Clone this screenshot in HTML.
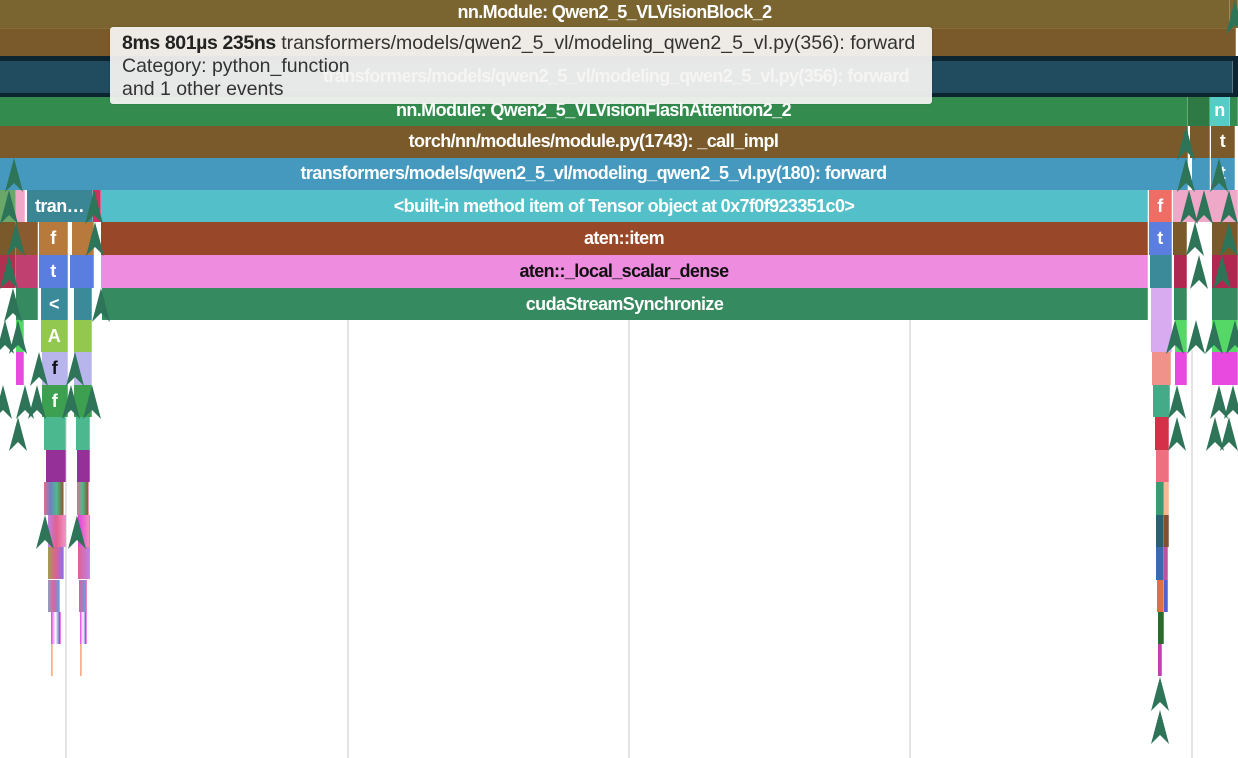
<!DOCTYPE html>
<html><head><meta charset="utf-8">
<style>
html,body{margin:0;padding:0;background:#fff;width:1238px;height:758px;overflow:hidden;position:relative;font-family:"Liberation Sans",sans-serif}
.b{position:absolute;color:#fff;font-size:18px;font-weight:bold;letter-spacing:-0.6px;text-align:center;white-space:nowrap;overflow:hidden;box-sizing:border-box;border-right:1px solid rgba(255,255,255,0.25)}
.g{position:absolute;top:320px;width:2px;height:438px;background:#e4e4e4}
.tip{position:absolute;left:110px;top:27px;width:822px;height:77px;background:rgba(246,245,243,0.93);border-radius:3px;box-sizing:border-box;padding:5px 12px;color:#333;font-size:19.5px;line-height:23px;box-shadow:0 0 2px rgba(0,0,0,.15);white-space:nowrap}
</style></head><body>
<div class="g" style="left:65px"></div>
<div class="g" style="left:347px"></div>
<div class="g" style="left:628px"></div>
<div class="g" style="left:909px"></div>
<div class="g" style="left:1191px;top:350px"></div>

<div class="b" style="left:0;top:0;width:1230px;height:28px;background:#7a6430;line-height:24px">nn.Module: Qwen2_5_VLVisionBlock_2</div>
<div class="b" style="left:1230px;top:0;width:8px;height:28px;background:#7a6430"></div>
<div class="b" style="left:0;top:28px;width:1236px;height:28px;background:#7a5a2a;border-top:1px solid #8a6a3a"></div>
<div style="position:absolute;left:0;top:56px;width:1238px;height:41px;background:#0c2530"></div>
<div class="b" style="left:0;top:61px;width:1233px;height:32px;background:#214b5e;line-height:31px;color:#e8eef0">transformers/models/qwen2_5_vl/modeling_qwen2_5_vl.py(356): forward</div>
<div class="b" style="left:0;top:97px;width:1188px;height:29px;background:#338c4e;line-height:27px">nn.Module: Qwen2_5_VLVisionFlashAttention2_2</div>
<div class="b" style="left:1188px;top:97px;width:22px;height:29px;background:#2f7a44"></div>
<div class="b" style="left:1210px;top:97px;width:20px;height:29px;background:#55ccc6;line-height:27px">n</div>
<div class="b" style="left:1230px;top:97px;width:8px;height:29px;background:#338c4e"></div>
<div class="b" style="left:0;top:126px;width:1188px;height:32px;background:#7a5a2a;line-height:31px">torch/nn/modules/module.py(1743): _call_impl</div>
<div class="b" style="left:1190px;top:126px;width:20px;height:32px;background:#7a5a2a"></div>
<div class="b" style="left:1211px;top:126px;width:24px;height:32px;background:#7a5a2a;line-height:31px">t</div>
<div class="b" style="left:0;top:158px;width:1188px;height:32px;background:#4599bf;line-height:31px">transformers/models/qwen2_5_vl/modeling_qwen2_5_vl.py(180): forward</div>
<div class="b" style="left:1192px;top:158px;width:18px;height:32px;background:#4599bf"></div>
<div class="b" style="left:1211px;top:158px;width:24px;height:32px;background:#4599bf;line-height:31px">t</div>
<div class="b" style="left:0;top:190px;width:16px;height:32px;background:#6aa86a"></div>
<div class="b" style="left:16px;top:190px;width:9px;height:32px;background:#f0a8c8"></div>
<div class="b" style="left:27px;top:190px;width:66px;height:32px;background:#3b8694;line-height:32px">tran…</div>
<div class="b" style="left:93px;top:190px;width:8px;height:32px;background:#d03060"></div>
<div class="b" style="left:101px;top:190px;width:1047px;height:32px;background:#53bfc8;line-height:32px">&lt;built-in method item of Tensor object at 0x7f0f923351c0&gt;</div>
<div class="b" style="left:1149px;top:190px;width:23px;height:32px;background:#ee6e66;line-height:32px">f</div>
<div class="b" style="left:1173px;top:190px;width:65px;height:32px;background:#f0a8c8"></div>
<div class="b" style="left:0;top:222px;width:16px;height:33px;background:#7a5a2a"></div>
<div class="b" style="left:16px;top:222px;width:22px;height:33px;background:#8a5a30"></div>
<div class="b" style="left:39px;top:222px;width:29px;height:33px;background:#b87a3c;line-height:32px">f</div>
<div class="b" style="left:72px;top:222px;width:22px;height:33px;background:#b87a3c"></div>
<div class="b" style="left:101px;top:222px;width:1047px;height:33px;background:#984828;line-height:32px">aten::item</div>
<div class="b" style="left:1149px;top:222px;width:23px;height:33px;background:#5b7ee0;line-height:32px">t</div>
<div class="b" style="left:1173px;top:222px;width:14px;height:33px;background:#7a5a2a"></div>
<div class="b" style="left:1212px;top:222px;width:26px;height:33px;background:#7a5a2a"></div>
<div class="b" style="left:0;top:255px;width:16px;height:33px;background:#b03050"></div>
<div class="b" style="left:16px;top:255px;width:22px;height:33px;background:#c04070"></div>
<div class="b" style="left:39px;top:255px;width:29px;height:33px;background:#5a7ee0;line-height:32px">t</div>
<div class="b" style="left:70px;top:255px;width:24px;height:33px;background:#5a7ee0"></div>
<div class="b" style="left:101px;top:255px;width:1047px;height:33px;background:#ee8ce0;line-height:32px;color:#111">aten::_local_scalar_dense</div>
<div class="b" style="left:1150px;top:255px;width:22px;height:33px;background:#3a8a9a"></div>
<div class="b" style="left:1174px;top:255px;width:13px;height:33px;background:#b02850"></div>
<div class="b" style="left:1212px;top:255px;width:26px;height:33px;background:#b02850"></div>
<div class="b" style="left:16px;top:288px;width:22px;height:32px;background:#358a60"></div>
<div class="b" style="left:41px;top:288px;width:27px;height:32px;background:#3a8a9a;line-height:32px">&lt;</div>
<div class="b" style="left:74px;top:288px;width:18px;height:32px;background:#3a8a9a"></div>
<div class="b" style="left:102px;top:288px;width:1046px;height:32px;background:#358a60;line-height:32px">cudaStreamSynchronize</div>
<div class="b" style="left:1151px;top:288px;width:21px;height:32px;background:#d8aaf0"></div>
<div class="b" style="left:1174px;top:288px;width:13px;height:32px;background:#358a60"></div>
<div class="b" style="left:1212px;top:288px;width:26px;height:32px;background:#358a60"></div>
<div class="b" style="left:16px;top:320px;width:8px;height:32px;background:#55d866"></div>
<div class="b" style="left:41px;top:320px;width:27px;height:32px;background:#92c850;line-height:32px">A</div>
<div class="b" style="left:74px;top:320px;width:18px;height:32px;background:#92c850"></div>
<div class="b" style="left:1151px;top:320px;width:21px;height:32px;background:#d8aaf0"></div>
<div class="b" style="left:1175px;top:320px;width:12px;height:32px;background:#55d866"></div>
<div class="b" style="left:1212px;top:320px;width:26px;height:32px;background:#55d866"></div>
<div class="b" style="left:16px;top:352px;width:8px;height:33px;background:#e84ae0"></div>
<div class="b" style="left:42px;top:352px;width:26px;height:33px;background:#b8b4ec;line-height:32px;color:#111">f</div>
<div class="b" style="left:74px;top:352px;width:18px;height:33px;background:#b8b4ec"></div>
<div class="b" style="left:1152px;top:352px;width:19px;height:33px;background:#f0928a"></div>
<div class="b" style="left:1175px;top:352px;width:12px;height:33px;background:#e84ae0"></div>
<div class="b" style="left:1212px;top:352px;width:26px;height:33px;background:#e84ae0"></div>
<div class="b" style="left:42px;top:385px;width:26px;height:32px;background:#3da050;line-height:32px">f</div>
<div class="b" style="left:74px;top:385px;width:18px;height:32px;background:#3da050"></div>
<div class="b" style="left:1153px;top:385px;width:17px;height:32px;background:#44aa88"></div>
<div class="b" style="left:44px;top:417px;width:22px;height:33px;background:#4cb890"></div>
<div class="b" style="left:76px;top:417px;width:14px;height:33px;background:#4cb890"></div>
<div class="b" style="left:46px;top:450px;width:20px;height:32px;background:#953099"></div>
<div class="b" style="left:77px;top:450px;width:13px;height:32px;background:#953099"></div>
<div class="b" style="left:44px;top:482px;width:20px;height:33px;background:linear-gradient(90deg,#e07090,#7080c0,#50b890,#806030)"></div>
<div class="b" style="left:77px;top:482px;width:12px;height:33px;background:linear-gradient(90deg,#e07090,#50b890,#806030)"></div>
<div class="b" style="left:48px;top:515px;width:18px;height:32px;background:linear-gradient(90deg,#c080e0,#e06090,#f090c0)"></div>
<div class="b" style="left:78px;top:515px;width:12px;height:32px;background:linear-gradient(90deg,#e040e0,#f090c0)"></div>
<div class="b" style="left:48px;top:547px;width:16px;height:32px;background:linear-gradient(90deg,#a0a050,#e06090,#9070e0)"></div>
<div class="b" style="left:78px;top:547px;width:12px;height:32px;background:linear-gradient(90deg,#e06090,#c080e0)"></div>
<div class="b" style="left:48px;top:580px;width:12px;height:32px;background:linear-gradient(90deg,#90a0c0,#e060a0,#60a0e0)"></div>
<div class="b" style="left:79px;top:580px;width:8px;height:32px;background:linear-gradient(90deg,#e060a0,#60a0e0)"></div>
<div class="b" style="left:51px;top:612px;width:10px;height:32px;background:linear-gradient(90deg,#e040e0,#fff,#5060c0)"></div>
<div class="b" style="left:80px;top:612px;width:7px;height:32px;background:linear-gradient(90deg,#e040e0,#fff,#5060c0)"></div>
<div class="b" style="left:51px;top:644px;width:2px;height:32px;background:#f5b090"></div>
<div class="b" style="left:80px;top:644px;width:2px;height:32px;background:#f5b090"></div>
<div class="b" style="left:1155px;top:417px;width:14px;height:33px;background:#d43048"></div>
<div class="b" style="left:1156px;top:450px;width:13px;height:33px;background:#ee7080"></div>
<div class="b" style="left:1156px;top:482px;width:8px;height:33px;background:#3a9a70"></div>
<div class="b" style="left:1164px;top:482px;width:5px;height:33px;background:#f8b890"></div>
<div class="b" style="left:1156px;top:515px;width:8px;height:32px;background:#2a6070"></div>
<div class="b" style="left:1164px;top:515px;width:5px;height:32px;background:#805030"></div>
<div class="b" style="left:1156px;top:547px;width:8px;height:33px;background:#3a6aae"></div>
<div class="b" style="left:1164px;top:547px;width:4px;height:33px;background:#c050a0"></div>
<div class="b" style="left:1157px;top:580px;width:7px;height:32px;background:#e07040"></div>
<div class="b" style="left:1164px;top:580px;width:4px;height:32px;background:#5060d0"></div>
<div class="b" style="left:1158px;top:612px;width:6px;height:32px;background:#2a6a2a"></div>
<div class="b" style="left:1158px;top:644px;width:4px;height:32px;background:#c040b0"></div>

<svg width="1238" height="758" style="position:absolute;left:0;top:0">
<defs><path id="a" d="M9 0 L18 34 L9 25 L0 34 Z" fill="#2d7458"/></defs>
<use href="#a" x="5" y="158"/><use href="#a" x="0" y="190"/><use href="#a" x="7" y="222"/><use href="#a" x="0" y="255"/><use href="#a" x="4" y="288"/><use href="#a" x="-4" y="320"/><use href="#a" x="9" y="320"/><use href="#a" x="-6" y="385"/>
<use href="#a" x="9" y="417"/><use href="#a" x="16" y="385"/><use href="#a" x="28" y="385"/><use href="#a" x="30" y="352"/>
<use href="#a" x="85" y="190"/><use href="#a" x="86" y="222"/><use href="#a" x="92" y="288"/><use href="#a" x="66" y="352"/><use href="#a" x="62" y="385"/><use href="#a" x="83" y="385"/>
<use href="#a" x="36" y="515"/><use href="#a" x="68" y="515"/>
<use href="#a" x="1177" y="126"/><use href="#a" x="1177" y="158"/><use href="#a" x="1210" y="158"/><use href="#a" x="1226" y="0"/>
<use href="#a" x="1180" y="190"/><use href="#a" x="1195" y="190"/><use href="#a" x="1220" y="190"/><use href="#a" x="1186" y="222"/><use href="#a" x="1220" y="222"/><use href="#a" x="1190" y="255"/><use href="#a" x="1213" y="255"/>
<use href="#a" x="1166" y="320"/><use href="#a" x="1187" y="320"/><use href="#a" x="1205" y="320"/><use href="#a" x="1226" y="320"/>
<use href="#a" x="1168" y="385"/><use href="#a" x="1210" y="385"/><use href="#a" x="1224" y="385"/><use href="#a" x="1168" y="417"/><use href="#a" x="1206" y="417"/><use href="#a" x="1220" y="417"/>
<use href="#a" x="1151" y="677"/><use href="#a" x="1151" y="710"/>
</svg>

<div class="tip"><span style="color:#222;font-weight:bold;letter-spacing:-0.4px">8ms 801µs 235ns</span> transformers/models/qwen2_5_vl/modeling_qwen2_5_vl.py(356): forward<br>Category: python_function<br>and 1 other events</div>
</body></html>
